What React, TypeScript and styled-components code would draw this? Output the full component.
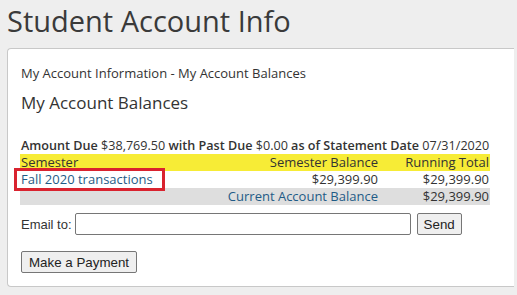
import React from "react";
import styled, { createGlobalStyle } from "styled-components";

const Global = createGlobalStyle`
  html, body { margin: 0; padding: 0; background: #eeeeee; }
  body { font-family: "Open Sans", "Liberation Sans", sans-serif; color: #333; }
`;

const Page = styled.div`
  padding: 0 7px 5px 7px;
  width: 517px;
  box-sizing: border-box;
`;

const PageTitle = styled.h1`
  margin: 0;
  font-size: 29px;
  font-weight: 400;
  line-height: 41px;
  color: #3a3a3a;
  height: 48px;
`;

const Panel = styled.div`
  background: #fff;
  border: 1px solid #c8c8c8;
  border-right: none;
  border-radius: 4px 0 0 4px;
  padding: 14px 20px 13px 13px;
  margin-right: -4px;
`;

const Crumb = styled.div`
  font-size: 13px;
  line-height: 20px;
`;

const Heading = styled.h2`
  margin: 8px 0 0 0;
  font-size: 17px;
  font-weight: 400;
  line-height: 24px;
`;

const Summary = styled.div`
  margin-top: 22px;
  font-size: 12.6px;
  line-height: 17px;
  white-space: nowrap;
  b { font-weight: 600; }
`;

const Table = styled.table`
  border-collapse: collapse;
  width: 470px;
  margin-left: -1px;
  font-size: 13px;
  td, th { padding: 0 1px; line-height: 17px; height: 17px; }
`;

const HeadRow = styled.tr`
  background: #f7ec36;
  th { font-weight: 400; color: #333; }
`;

const Row = styled.tr<{ $shade?: boolean }>`
  background: ${(p) => (p.$shade ? "#dedede" : "#fff")};
`;

const Cell = styled.td<{ $right?: boolean; $link?: boolean }>`
  text-align: ${(p) => (p.$right ? "right" : "left")};
  color: ${(p) => (p.$link ? "#1f5b86" : "#333")};
`;

const HCell = styled.th<{ $right?: boolean }>`
  text-align: ${(p) => (p.$right ? "right" : "left")};
`;

const Boxed = styled.span`
  display: inline-block;
  outline: 3px solid #d9232f;
  padding: 0 9px 0 4px;
  margin-left: -4px;
`;

const EmailRow = styled.div`
  display: flex;
  align-items: center;
  gap: 3px;
  margin-top: 8px;
  font-family: "Liberation Sans", Arial, sans-serif;
  font-size: 13px;
`;

const EmailInput = styled.input`
  width: 336px;
  height: 22px;
  box-sizing: border-box;
  border: 1px solid #767676;
  border-radius: 2px;
`;

const Btn = styled.button`
  font-family: "Liberation Sans", Arial, sans-serif;
  font-size: 13.33px;
  height: 22px;
  padding: 0 7px;
  background: #efefef;
  border: 1px solid #767676;
  border-radius: 2px;
  color: #222;
`;

const SendBtn = styled(Btn)`
  margin-left: 3px;
  padding: 0 6px;
`;

const PayRow = styled.div`
  display: flex;
  margin-top: 16px;
`;

export default function App() {
  return (
    <Page>
      <Global />
      <PageTitle>Student Account Info</PageTitle>
      <Panel>
        <Crumb>My Account Information - My Account Balances</Crumb>
        <Heading>My Account Balances</Heading>
        <Summary>
          <b>Amount Due</b> $38,769.50 <b>with Past Due</b> $0.00 <b>as of Statement Date</b> 07/31/2020
        </Summary>
        <Table>
          <colgroup>
            <col />
            <col />
            <col style={{ width: 111 }} />
          </colgroup>
          <tbody>
            <HeadRow>
              <HCell>Semester</HCell>
              <HCell $right>Semester Balance</HCell>
              <HCell $right>Running Total</HCell>
            </HeadRow>
            <Row>
              <Cell $link>
                <Boxed>Fall 2020 transactions</Boxed>
              </Cell>
              <Cell $right>$29,399.90</Cell>
              <Cell $right>$29,399.90</Cell>
            </Row>
            <Row $shade>
              <Cell></Cell>
              <Cell $right $link>Current Account Balance</Cell>
              <Cell $right>$29,399.90</Cell>
            </Row>
          </tbody>
        </Table>
        <EmailRow>
          Email to:
          <EmailInput type="text" />
          <SendBtn>Send</SendBtn>
        </EmailRow>
        <PayRow>
          <Btn>Make a Payment</Btn>
        </PayRow>
      </Panel>
    </Page>
  );
}
